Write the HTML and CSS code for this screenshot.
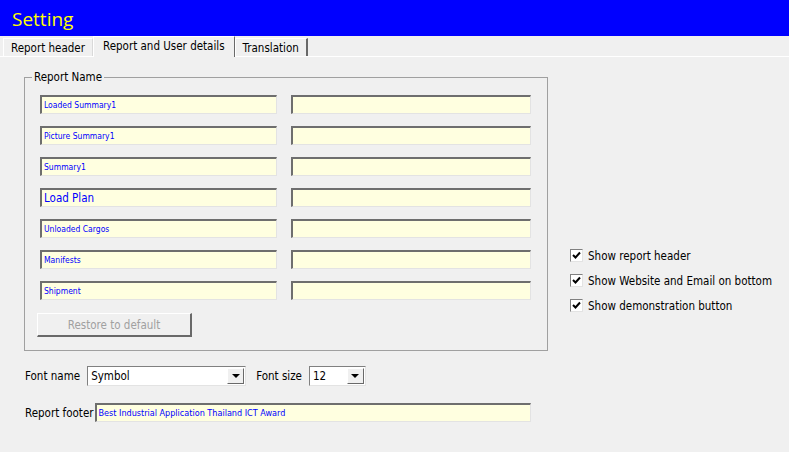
FILE: index.html
```html
<!DOCTYPE html>
<html lang="en">
<head>
    <meta charset="UTF-8">
    <title>Setting</title>
    <link rel="stylesheet" href="styles.css">
</head>
<body>
    <div class="title-bar">Setting</div>

    <div class="tabs">
        <div class="tab">Report header</div>
        <div class="tab active">Report and User details</div>
        <div class="tab">Translation</div>
    </div>

    <div class="panel">
        <div class="top-row">
            <fieldset class="group">
                <legend>Report Name</legend>
                <div class="names">
                    <div class="field small">Loaded Summary1</div>
                    <div class="field"></div>
                    <div class="field small">Picture Summary1</div>
                    <div class="field"></div>
                    <div class="field small">Summary1</div>
                    <div class="field"></div>
                    <div class="field big">Load Plan</div>
                    <div class="field"></div>
                    <div class="field small">Unloaded Cargos</div>
                    <div class="field"></div>
                    <div class="field small">Manifests</div>
                    <div class="field"></div>
                    <div class="field small">Shipment</div>
                    <div class="field"></div>
                </div>
                <button class="restore" disabled>Restore to default</button>
            </fieldset>

            <div class="options">
                <label class="check"><span class="box"><svg width="9" height="9" viewBox="0 0 9 9"><polyline points="1,4 3.5,6.5 8,1.5" fill="none" stroke="#000" stroke-width="2"/></svg></span>Show report header</label>
                <label class="check"><span class="box"><svg width="9" height="9" viewBox="0 0 9 9"><polyline points="1,4 3.5,6.5 8,1.5" fill="none" stroke="#000" stroke-width="2"/></svg></span>Show Website and Email on bottom</label>
                <label class="check"><span class="box"><svg width="9" height="9" viewBox="0 0 9 9"><polyline points="1,4 3.5,6.5 8,1.5" fill="none" stroke="#000" stroke-width="2"/></svg></span>Show demonstration button</label>
            </div>
        </div>

        <div class="font-row">
            <span class="label">Font name</span>
            <div class="combo font-name"><span class="value">Symbol</span><span class="arrow"></span></div>
            <span class="label size-label">Font size</span>
            <div class="combo font-size"><span class="value">12</span><span class="arrow"></span></div>
        </div>

        <div class="footer-row">
            <span class="label">Report footer</span>
            <div class="field small footer">Best Industrial Application Thailand ICT Award</div>
        </div>
    </div>
</body>
</html>
```

FILE: styles.css
```css
body {
    margin: 0;
    font-family: 'DejaVu Sans Condensed', 'DejaVu Sans', sans-serif;
    font-size: 11.5px;
    color: #000;
    background-color: #f0f0f0;
    width: 789px;
    height: 452px;
    overflow: hidden;
}

.title-bar {
    background-color: #0000ff;
    color: #ffff00;
    height: 36px;
    line-height: 38px;
    padding-left: 12px;
    font-family: 'Open Sans', sans-serif;
    font-size: 19px;
}

/* tab strip */
.tabs {
    display: flex;
    height: 21px;
    padding-left: 3px;
    border-bottom: 1px solid #fff;
    box-sizing: border-box;
    align-items: flex-end;
}

.tab {
    height: 18px;
    line-height: 18px;
    padding: 0 7px;
    border: 1px solid #d9d9d9;
    border-bottom: none;
    background-color: #f0f0f0;
    box-sizing: border-box;
}

.tab:first-child {
    border-top-color: #fff;
    border-left-color: #fff;
}

.tab.active {
    height: 21px;
    line-height: 18px;
    padding: 0 9px;
    border-left: 1px solid #fff;
    border-top: 1px solid #fff;
    border-right: 1px solid #696969;
    margin-bottom: -1px;
}

.tab:last-child {
    border-left: 1px solid #fff;
    border-top: 1px solid #fff;
    border-right: 2px solid #696969;
}

.panel {
    padding: 13px 0 0 24px;
}

.top-row {
    display: flex;
}

/* Report Name group */
.group {
    margin: 0;
    width: 524px;
    box-sizing: border-box;
    border: 1px solid #a0a0a0;
    padding: 11px 0 13px 12px;
}

.group legend {
    padding: 0 2px;
    margin-left: -5px;
    line-height: 14px;
}

.names {
    display: grid;
    grid-template-columns: 237px 240px;
    column-gap: 14px;
    row-gap: 12px;
    padding-left: 3px;
}

.field {
    height: 19px;
    box-sizing: border-box;
    background-color: #ffffe0;
    border-top: 2px solid #6e6e6e;
    border-left: 2px solid #6e6e6e;
    border-right: 1px solid #e3e3e3;
    border-bottom: 1px solid #e3e3e3;
    color: #0000ff;
    padding-left: 2px;
    white-space: nowrap;
    overflow: hidden;
}

.field.small {
    font-family: 'Liberation Sans Narrow', 'DejaVu Sans Condensed', sans-serif;
    font-size: 8.5px;
    line-height: 16px;
}

.field.big {
    font-size: 11.5px;
    line-height: 16px;
}

.restore {
    display: block;
    margin-top: 13px;
    width: 155px;
    height: 24px;
    background-color: #f0f0f0;
    border-top: 1px solid #fff;
    border-left: 1px solid #fff;
    border-right: 2px solid #696969;
    border-bottom: 2px solid #696969;
    color: #a0a0a0;
    font-family: inherit;
    font-size: 11.5px;
    padding: 0;
}

/* check boxes on the right */
.options {
    margin: 179px 0 0 22px;
    display: flex;
    flex-direction: column;
    gap: 12px;
}

.check {
    display: flex;
    align-items: center;
    height: 13px;
    gap: 5px;
}

.box {
    width: 13px;
    height: 13px;
    box-sizing: border-box;
    background-color: #fff;
    border-top: 1px solid #808080;
    border-left: 1px solid #808080;
    border-right: 1px solid #e3e3e3;
    border-bottom: 1px solid #e3e3e3;
    display: flex;
    align-items: center;
    justify-content: center;
}

/* font selection */
.font-row {
    display: flex;
    align-items: center;
    margin-top: 15px;
    padding-left: 1px;
}

.label {
    margin-right: 7px;
}

.size-label {
    margin-left: 10px;
}

.combo {
    display: flex;
    align-items: center;
    height: 20px;
    box-sizing: border-box;
    background-color: #fff;
    border-top: 1px solid #808080;
    border-left: 1px solid #808080;
    border-right: 1px solid #e3e3e3;
    border-bottom: 1px solid #e3e3e3;
}

.combo .value {
    flex: 1;
    padding-left: 3px;
}

.font-name {
    width: 159px;
}

.font-size {
    width: 57px;
}

.arrow {
    width: 17px;
    height: 16px;
    margin-right: 1px;
    box-sizing: border-box;
    background-color: #f0f0f0;
    border-top: 1px solid #fff;
    border-left: 1px solid #fff;
    border-right: 1px solid #696969;
    border-bottom: 1px solid #696969;
    display: flex;
    align-items: center;
    justify-content: center;
}

.arrow::after {
    content: "";
    border-left: 4px solid transparent;
    border-right: 4px solid transparent;
    border-top: 4px solid #000;
}

.footer-row {
    display: flex;
    align-items: center;
    margin-top: 17px;
    padding-left: 1px;
}

.footer-row .label {
    margin-right: 1px;
}

.field.footer {
    width: 436px;
    font-size: 9px;
}
```
